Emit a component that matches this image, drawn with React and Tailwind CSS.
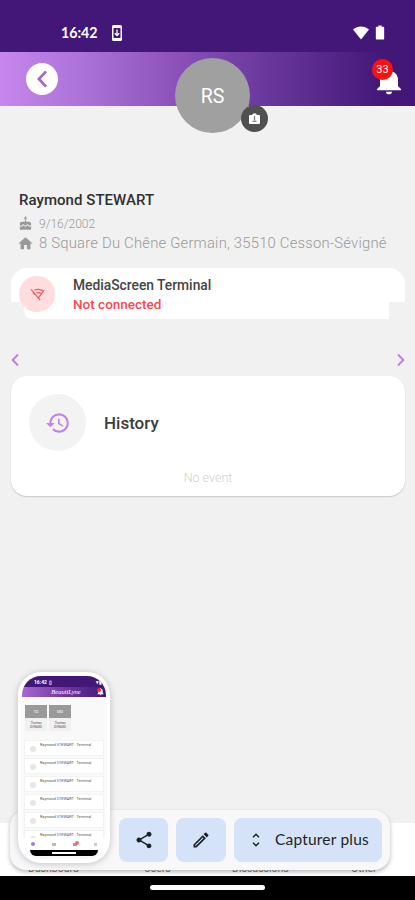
import {
  MdBatteryFull,
  MdCake,
  MdHistory,
  MdHome,
  MdNotifications,
  MdOutlineEdit,
  MdShare,
  MdUnfoldMore,
} from 'react-icons/md';

const previewRows = [1, 2, 3, 4, 5, 6];

function Chevron({ flip, className }) {
  return (
    <svg className={className} viewBox="0 0 8 14" fill="none" stroke="currentColor" strokeWidth="2">
      <path d={flip ? 'M1 1.5 L6.3 7 L1 12.5' : 'M7 1.5 L1.7 7 L7 12.5'} />
    </svg>
  );
}

// Barre de statut Android
function StatusBar() {
  return (
    <div className="flex h-[52px] items-start justify-between bg-[#421777] pt-6 pr-[25px] pl-[61px] text-white">
      <div className="flex items-center gap-[15px]">
        <span className="w-9 font-['Lato','Open_Sans',sans-serif] text-[14.2px] leading-[17px] font-bold whitespace-nowrap">16:42</span>
        <svg className="h-4 w-[10px]" viewBox="0 0 10 16">
          <rect width="10" height="16" rx="1.5" fill="#fff" />
          <rect x="1.5" y="3" width="7" height="10" fill="#421777" />
          <path d="M5 4.5v6M2.8 8.2 5 10.5l2.2-2.3" stroke="#fff" strokeWidth="1.3" fill="none" />
        </svg>
      </div>
      <div className="flex items-center">
        <svg className="h-[14px] w-4" viewBox="0 0 16 14" fill="#fff">
          <path d="M0 3.4C4.6-.6 11.4-.6 16 3.4L8 13.5Z" />
        </svg>
        <MdBatteryFull className="ml-[1px] h-[17px] w-[20px]" preserveAspectRatio="none" />
      </div>
    </div>
  );
}

function Header() {
  return (
    <div className="relative flex h-[54px] items-center justify-between bg-[linear-gradient(90deg,#c786ee_0%,#a870d6_22%,#8c52b9_42%,#6d3a9f_62%,#421777_93%)] pr-3 pl-[26px]">
      <div className="flex h-8 w-8 items-center justify-center rounded-full bg-white text-[#a268cf]">
        <svg className="h-[18px] w-[11px]" viewBox="0 0 12 20" fill="none" stroke="currentColor" strokeWidth="3">
          <path d="M10 1.5 2 10l8 8.5" />
        </svg>
      </div>
      <div className="relative mt-1 h-8 w-[28px] text-white">
        <MdNotifications className="absolute top-0 -left-[4px] h-8 w-[36px]" preserveAspectRatio="none" />
        <span className="absolute -top-[6px] -left-[3px] flex h-[21px] w-[21px] items-center justify-center rounded-full bg-[#ff1010] pt-[1px] text-[11px]">
          33
        </span>
      </div>
      {/* Avatar */}
      <div className="absolute top-[6px] left-[175px] flex h-[75px] w-[75px] items-center justify-center rounded-full bg-[#a0a0a0] pt-[3px] text-[19.5px] text-white">
        RS
      </div>
      <div className="absolute top-[53px] left-[241px] flex h-[27px] w-[27px] items-center justify-center rounded-full bg-[#505050]">
        <svg className="h-[11px] w-[11px]" viewBox="0 0 11 11">
          <path d="M1 2h2.2L4 .5h3L7.8 2H10a1 1 0 0 1 1 1v7a1 1 0 0 1-1 1H1a1 1 0 0 1-1-1V3a1 1 0 0 1 1-1Z" fill="#fff" />
          <path d="M5.5 3v4M3.5 8.2h4" stroke="#888" strokeWidth="1.4" />
        </svg>
      </div>
    </div>
  );
}

function UserInfo() {
  return (
    <div className="h-[162px] pt-[84px] pl-[18px]">
      <h1 className="pl-[1px] text-[15px] leading-5 font-medium tracking-[0.05px] text-[#303030]">Raymond STEWART</h1>
      <div className="mt-[4px] flex h-[19px] items-center text-[#999]">
        <MdCake className="h-[15px] w-[15px]" />
        <span className="ml-[6px] text-[12px] font-light">9/16/2002</span>
      </div>
      <div className="flex h-[21px] items-center text-[#999]">
        <MdHome className="h-[17px] w-[17px] -ml-[1px]" />
        <span className="ml-[5px] text-[14.8px] font-light tracking-[0.22px] whitespace-nowrap">
          8 Square Du Chêne Germain, 35510 Cesson-Sévigné
        </span>
      </div>
    </div>
  );
}

function TerminalCard() {
  return (
    <div className="relative mr-[10px] ml-[11px] h-[51px]">
      <div className="h-[34px] rounded-t-[16px] bg-white" />
      <div className="mr-[16px] ml-[13px] h-[17px] rounded-bl-[8px] bg-white" />
      <div className="absolute inset-0 flex pt-[8px] pl-[8px]">
        <div className="flex h-9 w-9 items-center justify-center rounded-full bg-[#ffdcde]">
          <svg className="h-[13px] w-[15px]" viewBox="0 0 16 14" fill="none" stroke="#ef5b63" strokeWidth="1.3">
            <path d="M1 1.5 11 13M4.5 2.2c3.6-1.4 7-.9 10 .9L8.5 11.5M7 5.2c1.8-.5 3.3-.3 4.8.4M3 5.2l1.8 1.7" />
          </svg>
        </div>
        <div className="ml-[18px] font-medium">
          <p className="text-[13.8px] leading-[19px] text-[#444]">MediaScreen Terminal</p>
          <p className="text-[13.5px] leading-[19px] text-[#f84850]">Not connected</p>
        </div>
      </div>
    </div>
  );
}

function HistoryCard() {
  return (
    <div className="mr-[10px] ml-[11px] h-[120px] rounded-[16px] bg-white pt-[18px] shadow-[0_1px_1.5px_rgba(0,0,0,0.18)]">
      <div className="flex items-center pl-[18px]">
        <div className="flex h-[57px] w-[57px] items-center justify-center rounded-full bg-[#f3f3f3]">
          <MdHistory className="h-[26px] w-[26px] text-[#c084e8]" />
        </div>
        <h2 className="mt-[2px] ml-[18px] text-[17px] font-medium text-[#3c3c3c]">History</h2>
      </div>
      <p className="mt-[17px] text-center text-[12.5px] leading-[20px] font-light text-[#cfcfcf]">No event</p>
    </div>
  );
}

// Miniature de la capture d'écran
function Preview() {
  return (
    <div className="absolute top-[672px] left-[18px] h-[191px] w-[92px] rounded-[23px] bg-white p-[4px] shadow-[0_1px_7px_rgba(0,0,0,0.22)]">
      <div className="flex h-full flex-col overflow-hidden rounded-[19px] bg-[#f9f9f9]">
        <div className="flex h-[11px] shrink-0 items-center justify-between bg-[#421777] pt-[2px] pr-[4px] pl-[12px] text-[5px] font-bold text-white">
          <span>16:42 &nbsp;▯</span>
          <span>▾▮</span>
        </div>
        <div className="relative h-[10px] shrink-0 bg-linear-to-r from-[#a866d3] via-[#71399f] to-[#421777] pl-[4px] text-center font-['Liberation_Serif',serif] text-[6.5px] leading-[9px] text-white italic">
          BeautiLyne
          <MdNotifications className="absolute top-0 right-[1px] h-[9px] w-[9px]" />
          <span className="absolute top-[1px] right-[5px] h-[4px] w-[4px] rounded-full bg-[#ff2020]" />
        </div>
        <div className="flex shrink-0 gap-[2px] pt-[8px] pl-[3px]">
          {['TD', 'MD'].map((name) => (
            <div key={name} className="h-[26px] w-[22px] bg-[#f1f1f1] text-center text-[3px] leading-[4px] text-[#555]">
              <div className="mb-[3px] h-[13px] bg-[#999] text-[4px] leading-[13px] text-white">{name}</div>
              <p>Thomas</p>
              <p>DURAND</p>
            </div>
          ))}
        </div>
        <div className="mt-[9px] flex h-[98px] shrink-0 flex-col gap-[2px] px-[2px]">
          {previewRows.map((row) => (
            <div key={row} className="flex h-[16px] shrink-0 border border-[#f2f2f2] bg-white pt-[1px] pl-[5px]">
              <span className="mt-[4px] h-[6px] w-[6px] rounded-full bg-[#e6e6e6]" />
              <span className="ml-[4px] text-[3.8px] leading-[5px] whitespace-nowrap text-[#555]">
                Raymond STEWART · Terminal
              </span>
            </div>
          ))}
        </div>
        <div className="relative flex h-[12px] shrink-0 items-center justify-around bg-white">
          <span className="h-[4px] w-[4px] rounded-full bg-[#a57be2]" />
          <span className="h-[3px] w-[4px] bg-[#bbb]" />
          <span className="relative h-[3px] w-[4px] bg-[#a99]">
            <span className="absolute -top-[2px] left-[2px] h-[4px] w-[4px] rounded-full bg-[#f07070]" />
          </span>
          <span className="h-[3px] w-[3px] bg-[#ccc]" />
        </div>
        <div className="mx-[8px] flex h-[6px] shrink-0 justify-center rounded-b-[10px] bg-black pt-[2px]">
          <span className="h-[1.5px] w-[24px] bg-white" />
        </div>
      </div>
    </div>
  );
}

function CaptureToolbar() {
  return (
    <div className="absolute top-[810px] left-[10px] flex h-[60px] w-[380px] justify-end gap-[8px] rounded-[16px] bg-[#f8f8fa] pt-[8px] pr-[8px] text-[#1b1f27] shadow-[0_2px_4px_rgba(0,0,0,0.28)]">
      <button className="flex h-[44px] w-[49px] items-center justify-center rounded-[8px] bg-[#d5e3f8]">
        <MdShare className="h-[20px] w-[20px]" />
      </button>
      <button className="flex h-[44px] w-[50px] items-center justify-center rounded-[8px] bg-[#d5e3f8]">
        <MdOutlineEdit className="h-[20px] w-[20px]" />
      </button>
      <button className="flex h-[44px] w-[148px] items-center rounded-[8px] bg-[#d5e3f8] pl-[13px]">
        <MdUnfoldMore className="h-[18px] w-[18px] shrink-0" />
        <span className="ml-[10px] font-['Lato',sans-serif] text-[15.5px] tracking-[0.2px] whitespace-nowrap">Capturer plus</span>
      </button>
    </div>
  );
}

export default function App() {
  return (
    <div className="relative flex h-[900px] w-[415px] flex-col overflow-hidden bg-[#f1f1f1] font-['Roboto',sans-serif]">
      <StatusBar />
      <Header />
      <UserInfo />
      <TerminalCard />
      <div className="flex h-[57px] items-center justify-between pt-[24px] pr-[10px] pl-[11px] text-[#bf80e8]">
        <Chevron className="h-[14px] w-2" />
        <Chevron className="h-[14px] w-2" flip />
      </div>
      <HistoryCard />

      {/* Onglets du bas */}
      <div className="mt-auto flex h-[53px] items-end bg-white pb-[1px] pl-[28px] text-[10.5px] leading-[13px] text-[#777]">
        <span className="w-[116px]">Dashboard</span>
        <span className="w-[88px]">Users</span>
        <span className="w-[119px]">Discussions</span>
        <span>Other</span>
      </div>
      <div className="flex h-[24px] justify-center bg-black pt-[9px]">
        <div className="h-[5px] w-[115px] rounded-full bg-white" />
      </div>

      <CaptureToolbar />
      <Preview />
    </div>
  );
}
